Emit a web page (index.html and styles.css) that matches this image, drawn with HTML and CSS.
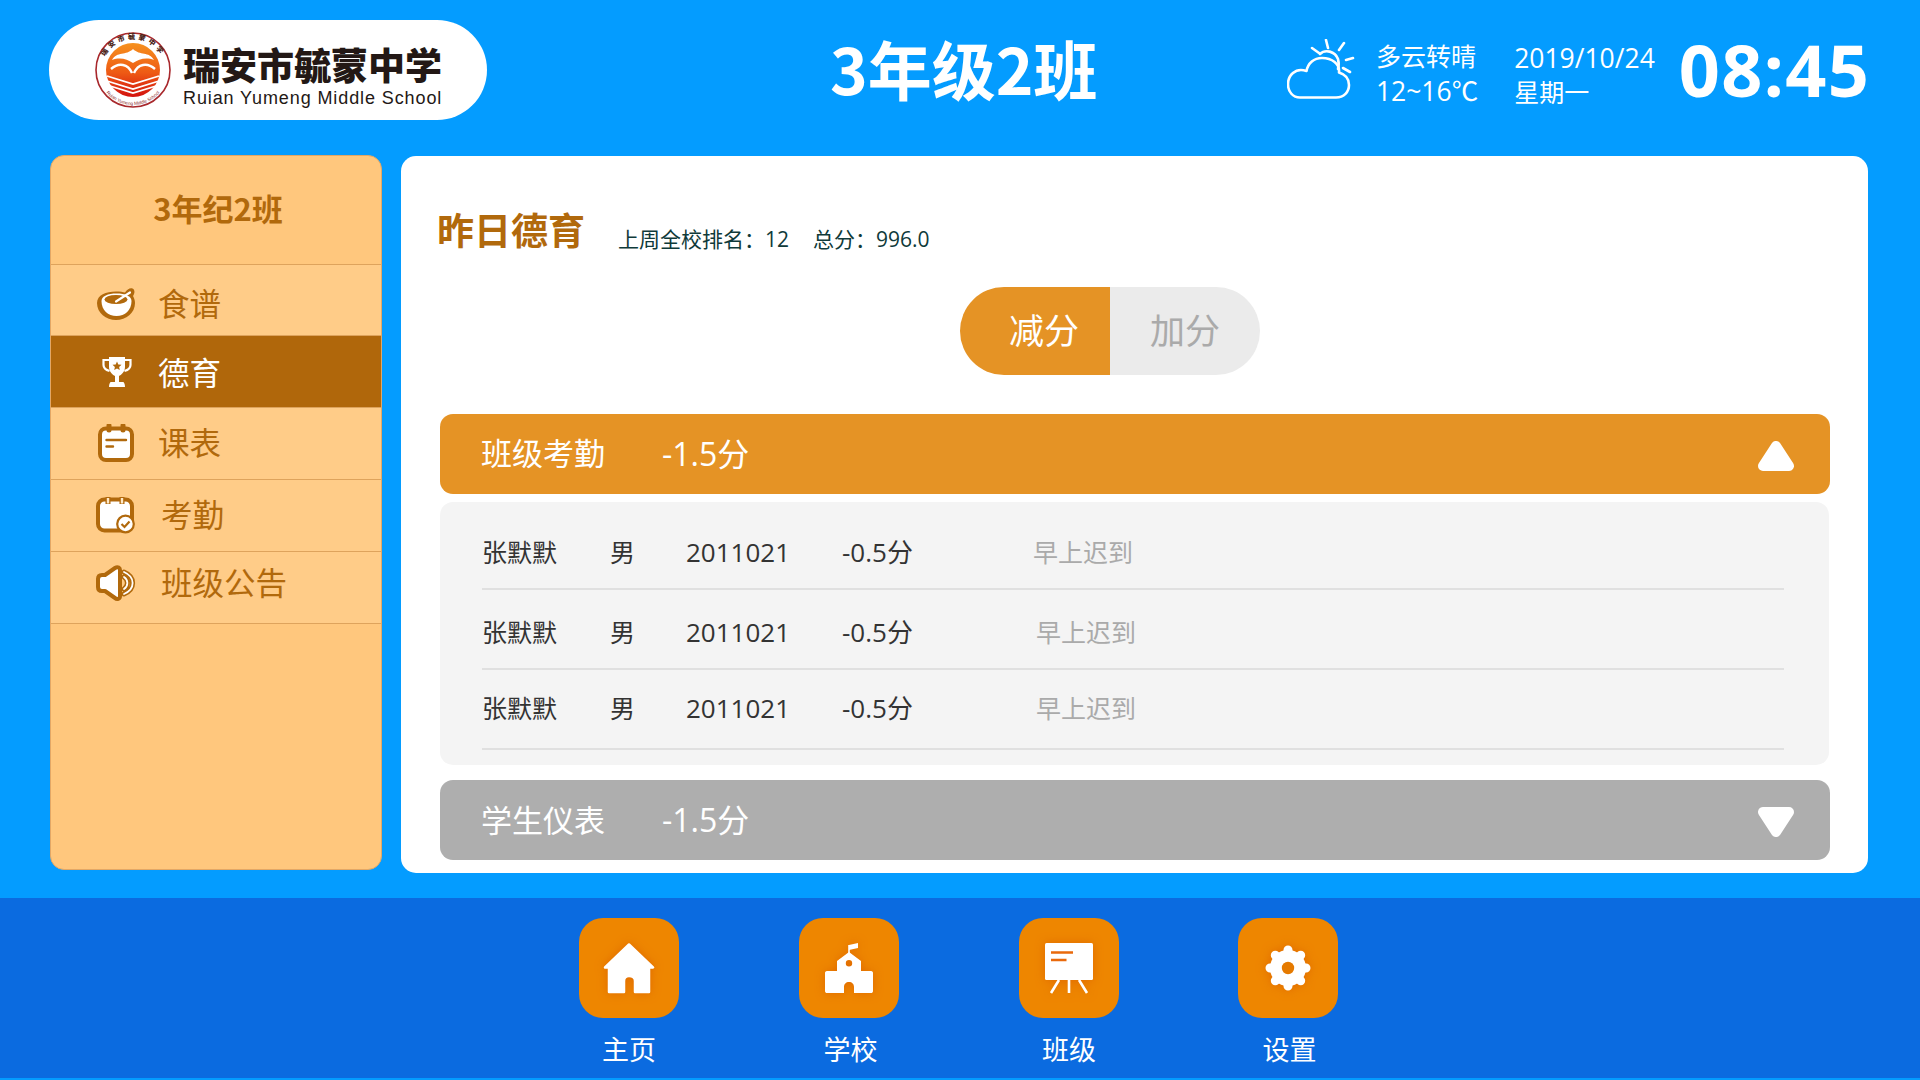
FILE: index.html
```html
<!DOCTYPE html>
<html lang="zh-CN">
<head>
<meta charset="utf-8">
<title>3年级2班</title>
<link rel="stylesheet" href="styles.css">
</head>
<body>
<div class="page">
  <header class="top">
    <div class="logo">
      <svg class="emblem" viewBox="0 0 76 76">
        <defs>
          <linearGradient id="sun" x1="0" y1="0" x2="0" y2="1">
            <stop offset="0" stop-color="#f6921e"/>
            <stop offset="0.55" stop-color="#ee5a14"/>
            <stop offset="1" stop-color="#d3120f"/>
          </linearGradient>
          <path id="ringTop" d="M7 38 A31 31 0 0 1 69 38"/>
          <path id="ringBottom" d="M3 38 A35 35 0 0 0 73 38"/>
        </defs>
        <circle cx="38" cy="38" r="37" fill="#fff" stroke="#a8282c" stroke-width="1.6"/>
        <circle cx="38" cy="38" r="27" fill="url(#sun)"/>
        <text class="ring-cn"><textPath href="#ringTop" startOffset="50%" text-anchor="middle">瑞安市毓蒙中学</textPath></text>
        <text class="ring-en"><textPath href="#ringBottom" startOffset="50%" text-anchor="middle">Ruian Yumeng Middle School</textPath></text>
        <path d="M17 28 C22 19 31 24 38 17 C45 24 54 19 59 28 C51 25 44 27 38 31 C32 27 25 25 17 28Z" fill="#fff"/>
        <path d="M16 37 C24 30 33 32 37 41 M60 37 C52 30 43 32 39 41" fill="none" stroke="#fff" stroke-width="2.4"/>
        <path d="M12 44 L38 52 L64 44 M12 49 L38 57 L64 49 M15 54 L38 61 L61 54" fill="none" stroke="#fff" stroke-width="1.8"/>
      </svg>
      <div class="logo-text">
        <div class="logo-cn">瑞安市毓蒙中学</div>
        <div class="logo-en">Ruian Yumeng Middle School</div>
      </div>
    </div>
    <h1 class="class-title">3年级2班</h1>
    <div class="status">
      <svg class="weather-icon" viewBox="0 0 68 60" fill="none" stroke="#fff" stroke-width="2.6" stroke-linecap="round" stroke-linejoin="round">
        <path d="M13 58.5 H49 C57 58.5 62 53 62 46 C62 39 57 35 52 33.5 C53 25 45 19 35 19 C27 19 21 24 19.5 32 C8 28 1 37 1 45 C1 53 6 58.5 13 58.5Z"/>
        <path d="M33 15 C38 10 48 12 51 20 C52 24 52 27 51 30"/>
        <path d="M39 1 L41 9 M57 4 L52 11 M66 19 L59 21 M25 9 L32 14 M56 29 L63 33"/>
      </svg>
      <div class="weather">
        <div>多云转晴</div>
        <div class="num">12~16℃</div>
      </div>
      <div class="date">
        <div class="num">2019/10/24</div>
        <div>星期一</div>
      </div>
      <div class="clock">08:45</div>
    </div>
  </header>

  <section class="content">
    <aside class="side">
      <div class="side-title">3年纪2班</div>
      <nav class="menu">
        <a class="menu-item item-food">
          <svg class="mi mi-bowl" viewBox="0 0 38 32">
            <path fill="#b1690c" d="M0 15 C0 7 9 3.5 19 3.5 C23 3.5 26 4 28 4.5 C30 1.5 33 -0.5 35.5 0.5 C38 1.5 38 5 36 8 C37 10 38 12 38 15 C38 25 29 32 19 32 C9 32 0 25 0 15Z"/>
            <path fill="#fff" d="M4.5 13 C4.5 8 11 5.5 19.5 5.5 C28 5.5 34.5 8 34.5 13 C34.5 22 28 28 19.5 28 C11 28 4.5 22 4.5 13Z"/>
            <ellipse cx="19" cy="11.5" rx="11.5" ry="4.5" fill="#b1690c"/>
            <path d="M19 13.5 L33 4.5" stroke="#fff" stroke-width="2.2" stroke-linecap="round"/>
          </svg>
          <span class="mt">食谱</span>
        </a>
        <a class="menu-item active item-moral">
          <svg class="mi mi-trophy" viewBox="0 0 30 30">
            <path fill="#fff" d="M7 0 H23 V10 C23 15 19 18 17 19 V25 H21 C22 25 23 27 23 30 H7 C7 27 8 25 9 25 H13 V19 C11 18 7 15 7 10Z"/>
            <path d="M7 3 H1.5 V8 C1.5 11 4 13 7.5 14 M23 3 H28.5 V8 C28.5 11 26 13 22.5 14" fill="none" stroke="#fff" stroke-width="2.2"/>
            <path fill="#b1690c" d="M15 4.5 L16.3 7.4 L19.5 7.8 L17.1 9.9 L17.8 13 L15 11.4 L12.2 13 L12.9 9.9 L10.5 7.8 L13.7 7.4Z"/>
          </svg>
          <span class="mt">德育</span>
        </a>
        <a class="menu-item item-up">
          <svg class="mi mi-cal" viewBox="0 0 36 38">
            <rect x="2" y="4.5" width="32" height="31.5" rx="6" fill="#fff" stroke="#b1690c" stroke-width="4"/>
            <path d="M11 1.5 V6 M25 1.5 V6" stroke="#b1690c" stroke-width="5" stroke-linecap="round"/>
            <path d="M8.5 16 H28 M8.5 22.5 H15" stroke="#b1690c" stroke-width="2.4" stroke-linecap="round"/>
          </svg>
          <span class="mt">课表</span>
        </a>
        <a class="menu-item item-up">
          <svg class="mi mi-check" viewBox="0 0 39 38">
            <rect x="2" y="3.5" width="34" height="31" rx="6.5" fill="#fff" stroke="#b1690c" stroke-width="4"/>
            <path d="M12 1 V8 M26 1 V8" stroke="#b1690c" stroke-width="5"/>
            <path d="M12 2 V7.5 M26 2 V7.5" stroke="#ffe9c8" stroke-width="2.4"/>
            <circle cx="29.5" cy="28" r="8.3" fill="#fff" stroke="#b1690c" stroke-width="2.2"/>
            <path d="M25.5 28 L28.5 31 L33.5 25.5" fill="none" stroke="#b1690c" stroke-width="2.2"/>
          </svg>
          <span class="mt mt-shift">考勤</span>
        </a>
        <a class="menu-item item-notice">
          <svg class="mi mi-speak" viewBox="0 0 41 38">
            <path fill="#fff" stroke="#b1690c" stroke-width="4" stroke-linejoin="round" d="M3 15 C3 12 5 11 7 11 H10 L20 4 C23 2 25 4 25 6 V32 C25 35 22 36 20 34 L10 27 H7 C5 27 3 26 3 23Z"/>
            <path d="M29 8 C40.5 13 40.5 25 29 30 M29 13 C33.5 16 33.5 22 29 25" fill="none" stroke="#b1690c" stroke-width="5" stroke-linecap="round"/>
            <path d="M29 8 C40.5 13 40.5 25 29 30 M29 13 C33.5 16 33.5 22 29 25" fill="none" stroke="#fff" stroke-width="1.8" stroke-linecap="round"/>
          </svg>
          <span class="mt mt-shift">班级公告</span>
        </a>
      </nav>
    </aside>

    <main class="panel">
      <div class="panel-head">
        <h2 class="panel-title">昨日德育</h2>
        <p class="panel-meta"><span>上周全校排名：12</span><span>总分：996.0</span></p>
      </div>
      <div class="toggle">
        <div class="tg tg-on">减分</div>
        <div class="tg tg-off">加分</div>
      </div>
      <div class="bar bar-on">
        <span class="bar-name">班级考勤</span>
        <span class="bar-score">-1.5分</span>
        <svg class="tri" viewBox="0 0 36 30"><polygon points="18,5 31,25 5,25" fill="#fff" stroke="#fff" stroke-width="10" stroke-linejoin="round"/></svg>
      </div>
      <div class="list">
        <div class="row">
          <span class="c-name">张默默</span><span class="c-sex">男</span><span class="c-id">2011021</span><span class="c-score">-0.5分</span><span class="c-note">早上迟到</span>
        </div>
        <div class="row">
          <span class="c-name">张默默</span><span class="c-sex">男</span><span class="c-id">2011021</span><span class="c-score">-0.5分</span><span class="c-note c-note-shift">早上迟到</span>
        </div>
        <div class="row row-tight">
          <span class="c-name">张默默</span><span class="c-sex">男</span><span class="c-id">2011021</span><span class="c-score">-0.5分</span><span class="c-note c-note-shift">早上迟到</span>
        </div>
      </div>
      <div class="bar bar-off">
        <span class="bar-name">学生仪表</span>
        <span class="bar-score">-1.5分</span>
        <svg class="tri" viewBox="0 0 36 30"><polygon points="5,5 31,5 18,25" fill="#fff" stroke="#fff" stroke-width="10" stroke-linejoin="round"/></svg>
      </div>
    </main>
  </section>

  <footer class="dock">
    <a class="dock-item">
      <span class="dock-btn">
        <svg class="dock-icon" viewBox="0 0 100 100">
          <path fill="#fff" stroke="#fff" stroke-width="2.5" stroke-linejoin="round" d="M50 26.5 L74 49.5 H70 V74 H56 V63 C56 59 53 58 50 58 C47 58 45 59 45 63 V74 H30 V49.5 H26Z"/>
        </svg>
      </span>
      <span class="dock-label">主页</span>
    </a>
    <a class="dock-item">
      <span class="dock-btn">
        <svg class="dock-icon" viewBox="0 0 100 100">
          <path d="M50 36 V27" stroke="#fff" stroke-width="1.6"/>
          <path fill="#fff" d="M50 27 L59 25 V30 L50 32Z"/>
          <path fill="#fff" fill-rule="evenodd" d="M50 34 L62 43 V53 H72 C73.5 53 74 54 74 55 V73 C74 74.5 73 75 72 75 H55 V69 C55 66 53 64 50 64 C47 64 45 66 45 69 V75 H28 C27 75 26 74.5 26 73 V55 C26 54 26.5 53 28 53 H38 V43Z M50 42 A3.2 3.2 0 1 0 50 48.4 A3.2 3.2 0 1 0 50 42Z"/>
        </svg>
      </span>
      <span class="dock-label dock-label-shift">学校</span>
    </a>
    <a class="dock-item">
      <span class="dock-btn">
        <svg class="dock-icon" viewBox="0 0 100 100">
          <rect x="26" y="25" width="48" height="37" rx="1.5" fill="#fff"/>
          <path d="M32 34.5 H54 M32 42 H47.5" stroke="#e96a0c" stroke-width="2.4"/>
          <path d="M40 62 L32 75 M50 62 V75 M60 62 L68 75" stroke="#fff" stroke-width="2.6"/>
        </svg>
      </span>
      <span class="dock-label">班级</span>
    </a>
    <a class="dock-item dock-item-last">
      <span class="dock-btn">
        <svg class="dock-icon" viewBox="0 0 100 100">
          <circle cx="50" cy="50" r="18" fill="#fff"/>
          <path d="M50 32 V68 M32 50 H68 M37.3 37.3 L62.7 62.7 M62.7 37.3 L37.3 62.7" stroke="#fff" stroke-width="9" stroke-linecap="round"/>
          <circle cx="50" cy="50" r="6.2" fill="#e57a00"/>
        </svg>
      </span>
      <span class="dock-label dock-label-shift">设置</span>
    </a>
  </footer>
</div>
</body>
</html>
```
FILE: styles.css
```css
* { box-sizing: border-box; }
html, body { margin: 0; padding: 0; }
body {
  font-family: "Open Sans", "Noto Sans CJK SC", sans-serif;
  color: #333;
}
h1, h2, p { margin: 0; font-weight: inherit; }
.page {
  width: 1920px;
  height: 1080px;
  background: #049cff;
  display: flex;
  flex-direction: column;
  overflow: hidden;
}

/* header */
.top {
  height: 155px;
  flex: none;
  display: flex;
  align-items: flex-start;
  padding: 20px 50px 0 49px;
  color: #fff;
}
.logo {
  width: 438px;
  height: 100px;
  background: #fff;
  border-radius: 50px;
  display: flex;
  align-items: center;
  padding-left: 46px;
  gap: 12px;
  flex: none;
}
.emblem { width: 76px; height: 76px; flex: none; }
.ring-cn { font-size: 7px; font-weight: 900; fill: #4a2418; font-family: "Noto Sans CJK SC", sans-serif; letter-spacing: 3px; }
.ring-en { font-size: 4.6px; fill: #8a2a2a; font-family: "Liberation Sans", sans-serif; }
.logo-text { display: flex; flex-direction: column; color: #231815; padding-top: 10px; }
.logo-cn {
  font-family: "Noto Sans CJK SC", sans-serif;
  font-weight: 900;
  font-size: 37px;
  line-height: 46px;
  white-space: nowrap;
}
.logo-en {
  font-family: "Liberation Sans", sans-serif;
  font-size: 18px;
  line-height: 22px;
  letter-spacing: 0.9px;
  white-space: nowrap;
}
.class-title {
  font-family: "Noto Sans CJK SC", sans-serif;
  font-weight: 700;
  font-size: 64px;
  line-height: 92px;
  margin: 1px 0 0 343px;
  white-space: nowrap;
}
.status {
  margin-left: auto;
  display: flex;
  align-items: flex-start;
}
.weather-icon { width: 68px; height: 60px; margin-top: 19px; flex: none; }
.weather, .date {
  font-size: 25px;
  line-height: 33px;
  margin-top: 20px;
}
.weather { margin-left: 21px; }
.date { margin-left: 36px; }
.num { font-size: 26.5px; line-height: 36px; }
.clock {
  font-weight: 700;
  font-size: 72px;
  line-height: 96px;
  letter-spacing: 1.2px;
  margin: 1px 0 0 24px;
}

/* content */
.content {
  height: 743px;
  flex: none;
  display: flex;
  align-items: flex-start;
  padding-left: 50px;
  gap: 19px;
}
.side {
  width: 332px;
  height: 715px;
  background: #ffc77d;
  border: 1px solid #e3a765;
  border-radius: 14px;
  overflow: hidden;
  flex: none;
}
.side-title {
  height: 109px;
  text-align: center;
  font-family: "Noto Sans CJK SC", sans-serif;
  font-weight: 700;
  font-size: 31px;
  line-height: 104px;
  color: #b1690c;
  padding-left: 4px;
  border-bottom: 1px solid #dea35c;
}
.menu { display: flex; flex-direction: column; }
.menu-item {
  height: 72px;
  background: #ffcc88;
  border-bottom: 1px solid #dea35c;
  position: relative;
  display: flex;
  align-items: center;
  padding-left: 107px;
  color: #b1690c;
  font-size: 31.5px;
}
.menu-item.active { background: #b0670b; color: #fff; }
.item-food { height: 71px; padding-top: 7px; }
.item-moral { padding-top: 2px; }
.item-up { padding-bottom: 2px; }
.item-notice { padding-bottom: 10px; }
.mt { line-height: 44px; }
.mt-shift { margin-left: 3px; }
.mi { position: absolute; }
.mi-bowl { left: 46px; top: 23px; width: 38px; height: 32px; }
.mi-trophy { left: 51px; top: 21px; width: 30px; height: 30px; }
.mi-cal { left: 47px; top: 16px; width: 36px; height: 38px; }
.mi-check { left: 45px; top: 16px; width: 39px; height: 38px; }
.mi-speak { left: 44px; top: 12px; width: 41px; height: 38px; }

/* panel */
.panel {
  width: 1467px;
  height: 717px;
  margin-top: 1px;
  background: #fff;
  border-radius: 15px;
  padding: 0 38px 0 39px;
  flex: none;
}
.panel-head {
  height: 131px;
  display: flex;
  align-items: flex-start;
  padding-top: 47px;
}
.panel-title {
  font-family: "Noto Sans CJK SC", sans-serif;
  font-weight: 700;
  font-size: 37px;
  line-height: 52px;
  color: #b1690c;
  margin-left: -3px;
  white-space: nowrap;
}
.panel-meta {
  font-size: 21px;
  line-height: 30px;
  color: #0f3a3a;
  margin: 21px 0 0 33px;
  display: flex;
  gap: 24px;
}
.toggle {
  display: flex;
  width: 300px;
  height: 88px;
  margin-left: 520px;
  font-size: 35px;
  line-height: 88px;
  text-align: center;
}
.tg-on { width: 150px; background: #e59325; color: #fff; border-radius: 44px 0 0 44px; padding-left: 18px; }
.tg-off { width: 150px; background: #ebebeb; color: #aaa; border-radius: 0 44px 44px 0; }
.bar {
  height: 80px;
  width: 1390px;
  border-radius: 13px;
  display: flex;
  align-items: center;
  color: #fff;
  font-size: 31px;
  padding: 0 0 4px 41px;
  position: relative;
}
.bar-on { background: #e59325; margin-top: 39px; padding-bottom: 5px; }
.bar-off { background: #aeaeae; margin-top: 15px; }
.bar-name { width: 181px; white-space: nowrap; }
.bar-score { font-size: 32px; }
.tri { position: absolute; right: 36px; top: 27px; width: 36px; height: 30px; }
.list {
  width: 1389px;
  height: 263px;
  margin-top: 8px;
  background: #f4f4f4;
  border-radius: 13px;
  padding: 8px 45px 0 42px;
  font-size: 25px;
}
.row {
  height: 80px;
  display: flex;
  align-items: flex-start;
  padding-top: 24px;
  line-height: 36px;
  border-bottom: 2px solid #e0e0e0;
  white-space: nowrap;
}
.row-tight { padding-top: 20px; }
.c-name { width: 128px; }
.c-sex { width: 76px; }
.c-id { width: 156px; font-size: 26px; }
.c-score { width: 191px; font-size: 26px; }
.c-note { color: #aaa; }
.c-note-shift { margin-left: 3px; }

/* dock */
.dock {
  height: 180px;
  flex: none;
  background: #0b6be0;
  display: flex;
  justify-content: flex-start;
  gap: 120px;
  padding: 20px 0 0 579px;
}
.dock-item { width: 100px; display: flex; flex-direction: column; align-items: center; color: #fff; }
.dock-item-last { margin-left: -1px; }
.dock-btn {
  width: 100px;
  height: 100px;
  background: #ee8600;
  border-radius: 24px;
  display: block;
}
.dock-icon {
  width: 100px;
  height: 100px;
  display: block;
  filter: drop-shadow(0 0 5px #e06a00);
}
.dock-label {
  font-size: 27px;
  line-height: 36px;
  margin-top: 14px;
}
.dock-label-shift { padding-left: 3px; }
```
